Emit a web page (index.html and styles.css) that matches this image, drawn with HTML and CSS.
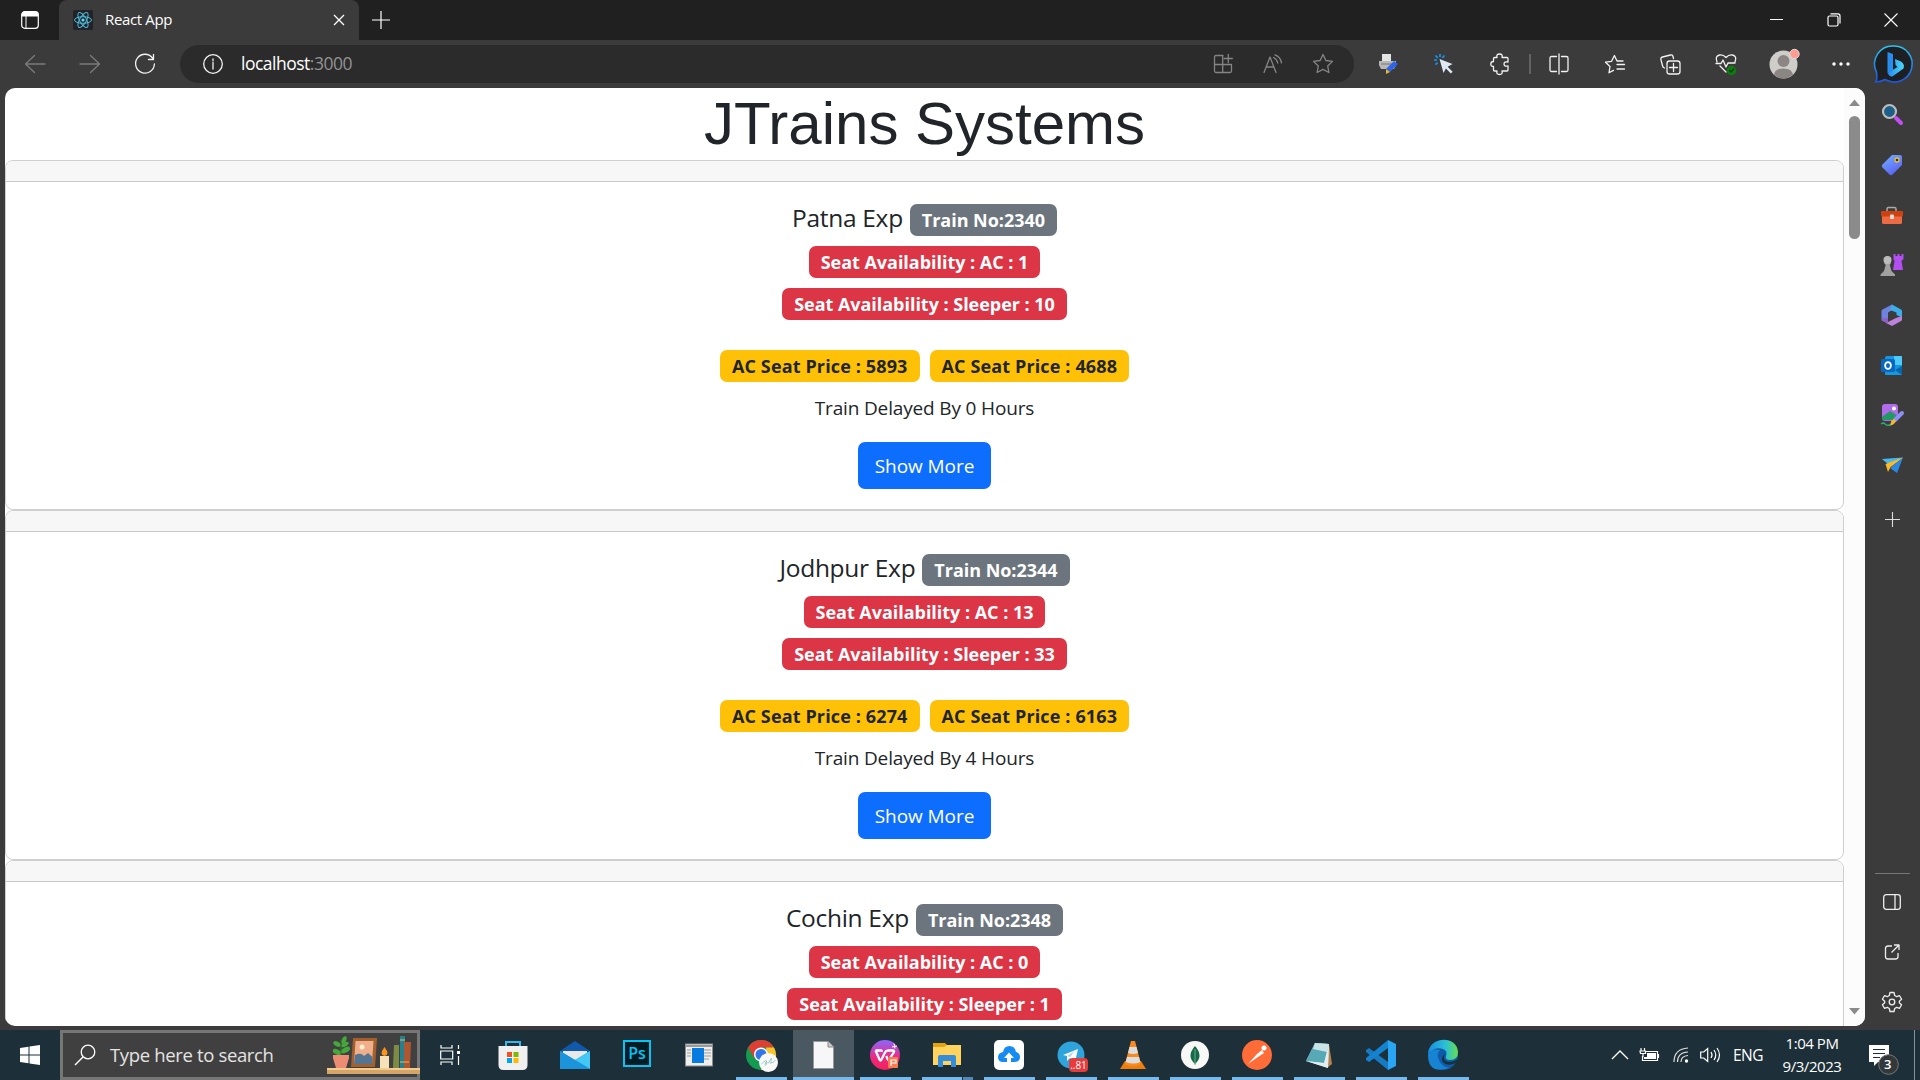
FILE: index.html
```html
<!DOCTYPE html>
<html lang="en">
<head>
<meta charset="utf-8">
<title>React App</title>
<link rel="stylesheet" href="styles.css">
</head>
<body>
<header class="titlebar">
  <div class="tab-actions"><svg width="18" height="18" viewBox="0 0 18 18"><rect x=".7" y=".7" width="16.6" height="16.6" rx="3" fill="none" stroke="#fff" stroke-width="1.2"/><path d="M1 5V3.500Q1 1 3.500 1h11Q17 1 17 3.500V5z" fill="#fff" stroke="#fff"/><path d="M5 5v12" stroke="#fff"/></svg></div>
  <div class="tab">
    <svg class="favicon" width="20" height="20" viewBox="0 0 20 20"><rect width="20" height="20" rx="1.500" fill="#20232a"/><g fill="none" stroke="#52bcd8" stroke-width="1"><ellipse cx="10" cy="10" rx="8.500" ry="3.300"/><ellipse cx="10" cy="10" rx="8.500" ry="3.300" transform="rotate(60 10 10)"/><ellipse cx="10" cy="10" rx="8.500" ry="3.300" transform="rotate(120 10 10)"/></g><circle cx="10" cy="10" r="1.600" fill="#61dafb"/></svg>
    <span class="tab-title">React App</span>
    <svg class="tab-close" width="12" height="12" viewBox="0 0 12 12"><path d="M1 1l10 10M11 1L1 11" stroke="#fff" stroke-width="1.300"/></svg>
  </div>
  <svg class="new-tab" width="18" height="18" viewBox="0 0 18 18"><path d="M9 0v18M0 9h18" stroke="#fff" stroke-width="1.200"/></svg>
  <div class="window-controls">
    <span><svg width="13" height="13" viewBox="0 0 13 13"><path d="M0 6.500h13" stroke="#fff"/></svg></span>
    <span><svg width="14" height="14" viewBox="0 0 14 14"><rect x="1" y="3" width="10" height="10" rx="1.500" fill="none" stroke="#fff" stroke-width="1.200"/><path d="M3.500.800H11Q13 .800 13 3v7.500" fill="none" stroke="#fff" stroke-width="1.200"/></svg></span>
    <span><svg width="14" height="14" viewBox="0 0 14 14"><path d="M.500.500l13 13M13.500.500l-13 13" stroke="#fff" stroke-width="1.100"/></svg></span>
  </div>
</header>

<nav class="toolbar">
  <div class="nav-buttons">
    <span class="dim"><svg width="22" height="20" viewBox="0 0 22 20"><path d="M21 10H1.500M10.500 1.500L1.500 10l9 8.500"/></svg></span>
    <span class="dim"><svg width="22" height="20" viewBox="0 0 22 20"><path d="M1 10h19.500M11.500 1.500l9 8.500-9 8.500"/></svg></span>
    <span><svg width="22" height="22" viewBox="0 0 22 22"><path d="M18.500 5A9.400 9.400 0 1 0 20.400 11M19.500 1.500v5h-5"/></svg></span>
  </div>
  <div class="address">
    <svg class="info" width="22" height="22" viewBox="0 0 22 22"><circle cx="11" cy="11" r="9.300"/><path d="M11 9.500v6.500M11 6v1.800"/></svg>
    <span class="url">localhost<span class="port">:3000</span></span>
    <span class="address-icon"><svg width="20" height="20" viewBox="0 0 20 20"><path d="M10 1.500H3Q1.500 1.500 1.500 3v14Q1.500 18.500 3 18.500h14q1.500 0 1.500-1.500v-6.500h-17M9.700 1.500v17M15.300.500v8M11.300 4.500h8"/></svg></span>
    <span class="address-icon"><svg width="20" height="20" viewBox="0 0 20 20"><path d="M1 18.500L7 3l6 15.500M3.300 13h7.500M10.500 3.500q3.500 1.500 4.200 5.500M12 .800q5.500 2 6.500 8"/></svg></span>
    <span class="address-icon"><svg width="22" height="22" viewBox="0 0 22 22"><path d="M11 1.500l2.900 6 6.600.9-4.800 4.600 1.200 6.500-5.900-3.100-5.900 3.100 1.200-6.500L1.500 8.400l6.600-.9z"/></svg></span>
  </div>
  <div class="tools">
    <i></i>
    <span><svg class="solid" width="20" height="20" viewBox="0 0 20 20"><path d="M4 0h9v7H4z" fill="#e4e4e4"/><path d="M1 7h17v4l-2 4H3l-2-4z" fill="#b9b9b9"/><path d="M3 10h12" stroke="#777"/><path d="M16 7l4 3-8 8-4-3z" fill="#2f63ea"/><path d="M8 15l4 3-4 2z" fill="#e7bc25"/></svg></span>
    <span><svg class="solid" width="20" height="20" viewBox="0 0 20 20"><path d="M5.500 5l4 14 2.400-4.400 5 4.900 1.700-1.700-5-5L18.500 10z" fill="#dfe8f5"/><path d="M6 0v3M1.500 1.500l2.300 2.300M0 6h3M1.500 10.700l2-2M10.500 1.500L8.300 3.800" stroke="#1494f2" stroke-width="1.700"/></svg></span>
    <span><svg width="20" height="22" viewBox="0 0 20 22"><path d="M4.500 4.500H7Q6 1 9.500 1T12 4.500h5Q18 4.500 18 5.500V9q-4-.8-4 2t4 2v4Q18 18 17 18h-5q1 3.500-2.500 3.500T7 18H4.500q-1 0-1-1v-3.500Q.800 13.500.800 11t2.700-2.500v-3q0-1 1-1z"/></svg></span>
    <b></b>
    <span><svg width="20" height="20" viewBox="0 0 20 20"><path d="M7.500 2.500h-5Q1 2.500 1 4v12q0 1.500 1.500 1.500h5M12.500 2.500h5Q19 2.500 19 4v12q0 1.500-1.500 1.500h-5M10 0v20"/></svg></span>
    <span><svg width="21" height="21" viewBox="0 0 21 21"><path d="M19 7h-6l-2.600-5.500-2.800 5.800-6.100.9L6 12.500l-1 6.300 4.500-2.400M13 10.500h7.500M13 15h7.500"/></svg></span>
    <span><svg width="21" height="21" viewBox="0 0 21 21"><rect x="7" y="7" width="13" height="13" rx="2.500"/><path d="M13.500 9.500v8M9.500 13.500h8M4.500 14Q3 13.500 2.600 12L.900 5.500Q.500 3.500 2.500 3l8-2q2-.5 2.500 1.500l.5 2"/></svg></span>
    <span><svg width="22" height="22" viewBox="0 0 22 22"><path d="M2 9Q-.3 3 4.500 2 8 1.300 11 4.500q3-3.200 6.500-2.500Q22.300 3 20 9M1 10.500h5l2-3.500 3 7 2-4h7M5 13l6 6"/><circle class="heart-ok" cx="16.500" cy="17.500" r="4"/><path class="heart-tick" d="M14.500 17.500l1.500 1.500 2.800-3"/></svg></span>
    <span><svg class="solid" width="30" height="30" viewBox="0 0 30 30"><circle cx="14.500" cy="15.500" r="14" fill="#cfcdca"/><circle cx="14.500" cy="12" r="6" fill="#8b8683"/><path d="M5 25.500q1-6 9.500-6t9.500 6q-4 4-9.500 4T5 25.500z" fill="#8b8683"/><circle cx="25.500" cy="5" r="4.700" fill="#ff9c92" stroke="#ddd"/></svg></span>
    <span><svg class="solid" width="18" height="4" viewBox="0 0 18 4"><g fill="#fff"><circle cx="2" cy="2" r="1.700"/><circle cx="9" cy="2" r="1.700"/><circle cx="16" cy="2" r="1.700"/></g></svg></span>
    <span><svg class="solid" width="38" height="38" viewBox="0 0 38 38"><defs><linearGradient id="ring" x1="0" y1="0" x2="0" y2="1"><stop stop-color="#2bc4ee"/><stop offset="1" stop-color="#1e55dc"/></linearGradient><linearGradient id="bee" x1="0" y1="0" x2="1" y2="0"><stop stop-color="#2588ef"/><stop offset="1" stop-color="#4ad9f6"/></linearGradient></defs><path d="M19 1a18 18 0 1 1-9 33.500Q5 37 .800 37 2.500 34 1.500 27A18 18 0 0 1 19 1z" fill="#1d1f22" stroke="url(#ring)" stroke-width="1.600"/><path d="M12.500 7l5.500 2v16l-5.500 3z" fill="#278df0"/><path d="M20 14l6 2.500q4 2.500 2.500 7L18 31q-3 2-5.500-3l10-6-2-2z" fill="url(#bee)"/></svg></span>
  </div>
</nav>

<div class="workspace">
  <div class="viewport">
    <main class="page">
      <h1>JTrains Systems</h1>
      <section class="card">
        <div class="card-header"></div>
        <div class="card-body">
          <h5><span class="name">Patna Exp</span> <span class="badge gray">Train No:2340</span></h5>
          <span class="badge red">Seat Availability : AC : 1</span>
          <span class="badge red">Seat Availability : Sleeper : 10</span>
          <div class="prices"><span class="badge yellow">AC Seat Price : 5893</span><span class="badge yellow">AC Seat Price : 4688</span></div>
          <p>Train Delayed By 0 Hours</p>
          <button class="more">Show More</button>
        </div>
      </section>
      <section class="card">
        <div class="card-header"></div>
        <div class="card-body">
          <h5><span class="name">Jodhpur Exp</span> <span class="badge gray">Train No:2344</span></h5>
          <span class="badge red">Seat Availability : AC : 13</span>
          <span class="badge red">Seat Availability : Sleeper : 33</span>
          <div class="prices"><span class="badge yellow">AC Seat Price : 6274</span><span class="badge yellow">AC Seat Price : 6163</span></div>
          <p>Train Delayed By 4 Hours</p>
          <button class="more">Show More</button>
        </div>
      </section>
      <section class="card">
        <div class="card-header"></div>
        <div class="card-body">
          <h5><span class="name">Cochin Exp</span> <span class="badge gray">Train No:2348</span></h5>
          <span class="badge red">Seat Availability : AC : 0</span>
          <span class="badge red">Seat Availability : Sleeper : 1</span>
        </div>
      </section>
    </main>
    <div class="scrollbar">
      <svg width="11" height="7" viewBox="0 0 11 7"><path d="M0 7L5.500.500 11 7z" fill="#8b8b8b"/></svg>
      <div class="thumb"></div>
      <svg class="down" width="11" height="7" viewBox="0 0 11 7"><path d="M0 0l5.500 6.500L11 0z" fill="#8b8b8b"/></svg>
    </div>
  </div>
  <aside class="sidebar">
    <span><svg width="22" height="22" viewBox="0 0 22 22"><path d="M15 15l5 5" stroke="#c44df5" stroke-width="4" stroke-linecap="round"/><circle cx="8.500" cy="8.500" r="6.500" fill="#1d5f88" stroke="#bcbcbc" stroke-width="2.200"/></svg></span>
    <span><svg width="22" height="22" viewBox="0 -1 22 22"><defs><linearGradient id="tag" x1="0" y1="0" x2=".6" y2="1"><stop stop-color="#72b2ff"/><stop offset="1" stop-color="#5c62f5"/></linearGradient></defs><path d="M11 1h8q2 0 2 2v8L11.500 20.500q-1.500 1.500-3 0l-7-7q-1.500-1.500 0-3z" fill="url(#tag)"/><circle cx="16" cy="6" r="2" fill="#263052" stroke="#f2c11c" stroke-width="1.300"/></svg></span>
    <span><svg width="24" height="20" viewBox="0 -1.500 24 20"><path d="M7 6V3.500Q7 2 8.500 2h6Q16 2 16 3.500V6" fill="none" stroke="#aaa" stroke-width="1.500"/><path d="M2 9h20v8q0 1.500-1.500 1.500h-17Q2 18.500 2 17z" fill="#ed6a43"/><rect x="1" y="5.500" width="22" height="5.500" rx="1" fill="#cf410f"/><rect x="10" y="9" width="4" height="4.500" rx="1" fill="#ddd"/></svg></span>
    <span><svg width="24" height="24" viewBox="0 0 24 24"><path d="M13.500 1h2v2h2V1h2v2h2V1h2v5l-2 2 1.500 9h-10l1.500-9-1-2z" fill="#b14ff0"/><path d="M4 10h7l-1.200 2 1.700 6 3.500 3.500V23H.500v-1.500L4 18l1.700-6z" fill="#a1a1a1"/><circle cx="7.500" cy="7" r="4" fill="#bcbcbc"/></svg></span>
    <span><svg width="22" height="22" viewBox="0 0 22 22"><path d="M11 .500L1.500 5.500Q.500 6 .500 7.500v8q0 1 1 1.500L7 19.500V8.500l6-3.500z" fill="#6d83df"/><path d="M11 .500l9 5q1 .5 1 1.500v6.500L15.500 11V8.500L9 6z" fill="#3caee9"/><path d="M21 12v3.500q0 1-1 1.500l-8 4.500q-1 .5-2 0l-5-2.500 10-5z" fill="#bd83dc"/><path d="M7 14v5.500l-5.500-3-1-2z" fill="#905fc4"/></svg></span>
    <span><svg width="22" height="22" viewBox="0 -1 22 22"><path d="M6 1h14q1 0 1 1v18H5q-1 0-1-1V3q0-2 2-2z" fill="#1499e0"/><path d="M13 1h7q1 0 1 1v8h-8z" fill="#4ccaf9"/><path d="M14 15l7-4v9z" fill="#0864ad"/><rect y="4" width="14" height="13" rx="1.500" fill="#0868c0"/><ellipse cx="7" cy="10.500" rx="2.900" ry="3.400" fill="none" stroke="#fff" stroke-width="1.800"/></svg></span>
    <span><svg width="24" height="24" viewBox="0 0 24 24"><rect x="2" y="1" width="16" height="17" rx="3" fill="#b26beb"/><path d="M2 14l8-6 8 5v4H2z" fill="#209964"/><circle cx="14" cy="5.500" r="2" fill="#fff"/><path d="M15 17l7-7" stroke="#8a90f5" stroke-width="4" stroke-linecap="round"/><path d="M16 18q-2 5-7 4 2-1 2-3t3-3z" fill="#f5b62b"/><path d="M1 21q3-2 4 0t6 1" fill="none" stroke="#27b36e" stroke-width="1.500"/></svg></span>
    <span><svg width="23" height="18" viewBox="0 0 23 18"><path d="M1 3l21-1.500-12 9z" fill="#47b9f2"/><path d="M22 1.500L16 17l-7-5z" fill="#2989e4"/><path d="M4.500 8L22 1.500 9.500 11 7 16z" fill="#ffb922"/></svg></span>
    <span class="add"><svg width="15" height="15" viewBox="0 0 15 15"><path d="M7.500 0v15M0 7.500h15" stroke="#ddd" stroke-width="1.100"/></svg></span>
    <hr>
    <span class="line"><svg width="18" height="16" viewBox="0 0 18 16"><rect x=".7" y=".7" width="16.600" height="14.600" rx="2.500"/><path d="M12 1v14"/></svg></span>
    <span class="line"><svg width="16" height="16" viewBox="0 0 16 16"><path d="M8 2H4Q1.500 2 1.500 4.500v8Q1.500 15 4 15h7.500Q14 15 14 12.500V9M10 1h5v5M15 1L7.500 8.500"/></svg></span>
    <span class="line"><svg width="22" height="22" viewBox="0 0 22 22"><circle cx="11" cy="11" r="2.800"/><path d="M9 1.500h4l.7 3 2 1.200 2.900-1 2 3.500-2.300 2v1.600l2.300 2-2 3.500-2.900-1-2 1.200-.7 3H9l-.7-3-2-1.200-2.900 1-2-3.500 2.300-2v-1.600l-2.300-2 2-3.500 2.900 1 2-1.200z"/></svg></span>
  </aside>
</div>

<footer class="taskbar">
  <div class="start"><svg width="20" height="20" viewBox="0 0 20 20"><path d="M0 3l8.500-1.200v7.700H0zM9.500 1.600L20 0v9.500H9.500zM0 10.500h8.500v7.700L0 17zM9.500 10.500H20V20L9.500 18.400z" fill="#fff"/></svg></div>
  <div class="search">
    <svg width="22" height="22" viewBox="0 0 22 22"><circle cx="14" cy="8" r="6.800" fill="none" stroke="#fff" stroke-width="1.300"/><path d="M9 13l-8 8" stroke="#fff" stroke-width="1.400"/></svg>
    <span>Type here to search</span>
    <svg class="shelf" width="93" height="40" viewBox="0 0 93 40"><path d="M0 33h93v6H0z" fill="#d4a567"/><path d="M0 33h93v2H0z" fill="#f1cc92"/><g fill="#46a83c"><ellipse cx="10" cy="17" rx="4.500" ry="2.500" transform="rotate(25 10 17)"/><ellipse cx="18.500" cy="15" rx="5" ry="2.500" transform="rotate(-28 18.500 15)"/><ellipse cx="10" cy="9" rx="4" ry="2.200" transform="rotate(30 10 9)"/><ellipse cx="17" cy="5" rx="4" ry="2.200" transform="rotate(-65 17 5)"/><ellipse cx="18" cy="9.500" rx="4" ry="2" transform="rotate(-28 18 9.500)"/></g><path d="M14 5v15" stroke="#307c30"/><path d="M6 20h16v3l-3 10H9L6 23z" fill="#eb8c73"/><path d="M26 3h24l-2 29H24z" fill="#a35f2c"/><path d="M28.500 6h18L45 29H27z" fill="#f0af8c"/><circle cx="35" cy="12" r="2.500" fill="#fff0cb"/><path d="M28 20q6-3 9 1l4-3 4.500 4-.5 7H27z" fill="#547591"/><path d="M53 21h9v12h-9z" fill="#f6e1b8"/><path d="M57.500 12q6 8 0 9-6-1 0-9z" fill="#ff9419"/><path d="M67 10h5v23h-6z" fill="#7e8b43"/><path d="M73 1h5v32h-5z" fill="#258191"/><path d="M77 7h7l-1 26h-6z" fill="#ac572f"/><path d="M73 5h5M73 27h9" stroke="#e9b954"/></svg>
  </div>
  <div class="task-view"><svg width="20" height="20" viewBox="0 0 20 20"><path d="M1 0v3h11V0M1 20v-3h11v3M.700 6h12v8H.700zM18.500 0v4M18.500 11v9" fill="none" stroke="#fff" stroke-width="1.200"/><path d="M17 6h3v3h-3z" fill="#fff"/></svg></div>
  <div class="app"><svg width="30" height="30" viewBox="0 0 30 30"><path d="M8 7V2h14v5" fill="none" stroke="#35b7eb" stroke-width="2"/><path d="M.500 6h29v19q0 5-5 5h-19q-5 0-5-5z" fill="#f0f0f0"/><path d="M9 12h5v5H9z" fill="#f25022"/><path d="M15.500 12h5v5h-5z" fill="#7fba00"/><path d="M9 18h5v5H9z" fill="#00a4ef"/><path d="M15.500 18h5v5h-5z" fill="#ffb900"/></svg></div>
  <div class="app"><svg width="30" height="30" viewBox="0 0 30 30"><path d="M0 11L15 1l15 10v8H0z" fill="#1059ad"/><path d="M3 11h24v8l-12 6-12-6z" fill="#e9e9e9"/><path d="M0 11l15 9L30 11v18H0z" fill="#23a4e5"/><path d="M15 20l15-9v18z" fill="#43c7f5"/><path d="M15 20l15 9H0V11z" fill="#1b94dc"/></svg></div>
  <div class="app"><div class="photoshop">Ps</div></div>
  <div class="app"><svg width="28" height="24" viewBox="0 0 28 24"><rect x=".5" y="1" width="27" height="22" fill="#eee" stroke="#8c8c8c"/><path d="M1 2h26v2H1z" fill="#999"/><path d="M2 7h4M2 10h4M2 13h4M19 7h7M19 10h7M19 13h7M19 16h5" stroke="#999"/><path d="M7 5h12v15H7z" fill="#087be0"/></svg></div>
  <div class="app running"><svg width="30" height="30" viewBox="0 0 30 30"><circle cx="15" cy="15" r="15" fill="#149b50"/><path d="M2 7.500A15 15 0 0 1 28 7.500H15l-6.500 11z" fill="#df3f32"/><path d="M28 7.500A15 15 0 0 1 15 30l6.500-11.500L20 7.500z" fill="#fbc42b"/><circle cx="15" cy="14.500" r="7" fill="#fff"/><circle cx="15" cy="14.500" r="5.500" fill="#3177e8"/><circle cx="22.500" cy="22.500" r="9.500" fill="#f9f9fa"/><path d="M15.500 24q5-5 5-3c0 5-2 6-1 2 1-3 2 1 3 0l3-5c-1 7-1 6 0 4l1 1 3-3" fill="none" stroke="#9acbc0"/></svg></div>
  <div class="app running active"><svg width="21" height="28" viewBox="0 0 21 28"><path d="M.500.500H15L20.500 6v21.500H.500z" fill="#f7f7f7" stroke="#999"/><path d="M15 .500V6h5.500" fill="#ccc" stroke="#888"/></svg></div>
  <div class="app running"><svg width="30" height="30" viewBox="0 0 30 30"><defs><linearGradient id="wps" x1="0" y1="0" x2="0" y2="1"><stop stop-color="#8d66ff"/><stop offset=".6" stop-color="#ed287f"/><stop offset="1" stop-color="#f4215c"/></linearGradient></defs><circle cx="15" cy="15" r="15" fill="url(#wps)"/><path d="M5.500 10.500H11q1 0 .5 1.200M5.500 10.500l4 9q1 2 2 0l3.500-7q1-2 3-2h5q1.500 0 1 1.500L19.500 19q-1 2-2 0l-1.200-3" fill="none" stroke="#fff" stroke-width="2.300"/><path d="M22 7l5-1M24 3.500l1 5" stroke="#fff"/><rect x="18" y="17" width="10" height="11" rx="1" fill="#ff794e"/><path d="M21 26v-6h5v3h-5" fill="none" stroke="#fff" stroke-width="1.200"/></svg></div>
  <div class="app running grouped"><svg width="28" height="24" viewBox="0 0 28 24"><path d="M0 0h12l3 3v6H0z" fill="#e4a210"/><path d="M0 4h11l3-2h14v20H0z" fill="#ffd35d"/><path d="M5 24V14q0-2 2-2h14q2 0 2 2v10h-5v-6h-8v6z" fill="#348ddb"/></svg></div>
  <div class="app running"><svg width="30" height="30" viewBox="0 0 30 30"><rect width="30" height="30" rx="5" fill="#fff"/><path d="M9 22q-5 0-5-5 0-4 5-5 1-6 6.500-6T22 12q4 1 4 5 0 5-6 5z" fill="#168cf2"/><path d="M15 12.500L10 18h3v6h4v-6h3z" fill="#fff"/></svg></div>
  <div class="app running telegram"><svg width="28" height="28" viewBox="0 0 28 28"><circle cx="14" cy="14" r="13.500" fill="#2fa3dc"/><path d="M6 14l15-6-3 13-5-4-3 3v-5z" fill="#fff"/><path d="M10 15l8-5-5 6" fill="#add3ea"/></svg><b>..81</b></div>
  <div class="app running"><svg width="26" height="30" viewBox="0 0 26 30"><path d="M5 21h16l5 8H0z" fill="#ee7e0b"/><path d="M11 1h4l6 23q-8 5-16 0z" fill="#fa8a1f"/><path d="M9.500 7h7l1.500 6q-5 2-10 0zM7 17h12l1.300 5q-7 3-14.600 0z" fill="#ddd"/></svg></div>
  <div class="app running"><svg width="28" height="28" viewBox="0 0 28 28"><circle cx="14" cy="14" r="14" fill="#f8f8f6"/><path d="M14 5q9 10 0 18-9-8 0-18z" fill="#136b4a"/><path d="M14 8v16" stroke="#76a68a"/></svg></div>
  <div class="app running"><svg width="30" height="30" viewBox="0 0 30 30"><circle cx="15" cy="15" r="15" fill="#ff6c37"/><path d="M6 24l9-10 5-4 2 3-6 4z" fill="#fff"/><circle cx="22" cy="8" r="2.500" fill="#fff"/></svg></div>
  <div class="app running"><svg width="28" height="28" viewBox="0 0 28 28"><path d="M24 3l3 20-5 4z" fill="#b5824c"/><path d="M10 2l14 1-1 24L1 20z" fill="#a7d3d8"/><path d="M10 2l14 1-5 19L1 20z" fill="#57a9b6"/><path d="M10 2l14 1-2 8L8 8z" fill="#c9e4e6"/><path d="M19 22l5-19-1 24-22-7z" fill="#e5eeee"/></svg></div>
  <div class="app running"><svg width="30" height="30" viewBox="0 0 30 30"><path d="M0 10l3-2L22 22v8L0 12z" fill="#177bc3"/><path d="M0 20l3 2L22 8V0L0 18z" fill="#1382d1"/><path d="M22 0l8 4v22l-8 4z" fill="#29a5f4"/></svg></div>
  <div class="app running"><svg width="30" height="30" viewBox="0 0 30 30"><defs><linearGradient id="wave"><stop stop-color="#168ce0"/><stop offset=".6" stop-color="#2cc1d3"/><stop offset="1" stop-color="#66df4c"/></linearGradient></defs><circle cx="15" cy="15" r="15" fill="#0d5ba9"/><path d="M0 14C1-4 29-5 30 12q0 8-8 8-5 0-4-4 2-5-3-7-8-3-15 5z" fill="url(#wave)"/><path d="M0 15Q3 8 12 10q-4 4-1 10 3 7 11 8-22 7-22-13z" fill="#1684d3"/><path d="M17 14q-4 7 5 8 4 0 8-3v3l-2 1q-9 4-13-1-3-4 2-8z" fill="#1d2f38"/></svg></div>
  <div class="tray">
    <span><svg width="18" height="10" viewBox="0 0 18 10"><path d="M1 9l8-8 8 8" fill="none" stroke="#fff" stroke-width="1.300"/></svg></span>
    <span><svg width="20" height="14" viewBox="0 0 20 14"><path d="M5 3.500h12.500v9H2.500V8M18.500 6v4M1 0v3M4.500 0v3M0 3h5.500v2.500h-5zM3 6v3" fill="none" stroke="#fff" stroke-width="1.200"/><path d="M7 5h9v6H4V9h3z" fill="#fff"/></svg></span>
    <span><svg width="16" height="16" viewBox="0 0 16 16"><g fill="none" stroke="#ddd" stroke-width="1.200"><path d="M1 15Q1 2 15 1M4.500 15q0-9.500 10.500-10M8 15q0-6 7-6.500"/></g><circle cx="13.500" cy="14" r="1.700" fill="#fff"/></svg></span>
    <span><svg width="21" height="16" viewBox="0 0 21 16"><path d="M.700 5h3l4-3.500v13l-4-3.500h-3zM11 5q2 3 0 6M14 3q3.500 5 0 10M17 1q5 7 0 14" fill="none" stroke="#fff" stroke-width="1.200"/></svg></span>
    <span class="lang">ENG</span>
    <span class="clock"><em>1:04 PM</em><em>9/3/2023</em></span>
    <span class="notify"><svg width="30" height="30" viewBox="0 0 30 30"><path d="M0 0h20v17H9l-4 4v-4H0z" fill="#fff"/><path d="M4 4.500h12M4 8.500h12M4 12.500h7" stroke="#1e2f38"/><circle cx="19.500" cy="19.500" r="9.800" fill="#33383b" stroke="#777"/></svg><b>3</b></span>
    <i></i>
  </div>
</footer>
</body>
</html>
```

FILE: styles.css
```css
* { box-sizing: border-box; }
body {
  margin: 0;
  width: 1920px;
  height: 1080px;
  overflow: hidden;
  display: flex;
  flex-direction: column;
  background: #3b3b3b;
  font-family: "Open Sans", "Noto Sans", sans-serif;
}
svg { display: block; flex: none; overflow: visible; }

/* Tab strip */
.titlebar { height: 40px; flex: none; display: flex; align-items: center; background: #202020; }
.tab-actions { width: 59px; display: flex; justify-content: center; }
.tab { width: 300px; height: 40px; display: flex; align-items: center; padding: 0 14px; border-radius: 8px 8px 0 0; background: #3b3b3b; color: #fff; font-size: 15px; }
.tab-title { margin-left: 12px; padding-bottom: 2px; flex: 1; letter-spacing: -.35px; }
.new-tab { margin-left: 13px; }
.window-controls { margin-left: auto; display: flex; }
.window-controls span { width: 57.5px; display: flex; justify-content: center; }

/* Toolbar */
.toolbar { height: 48px; flex: none; display: flex; align-items: center; }
.toolbar svg:not(.solid) { fill: none; stroke: #f2f2f2; stroke-width: 1.3; stroke-linecap: round; stroke-linejoin: round; }
.toolbar .dim svg:not(.solid) { stroke: #7b7b7b; }
.toolbar .heart-ok { fill: #107c10; stroke: #107c10; }
.toolbar .heart-tick { stroke: #083f08; }
.nav-buttons { width: 180px; padding-left: 7.5px; display: flex; }
.nav-buttons span { width: 55px; display: flex; align-items: center; justify-content: center; }
.address { width: 1174px; height: 38px; padding: 0 6px 0 21.5px; border-radius: 19px; display: flex; align-items: center; background: #2b2b2b; }
.url { margin-left: 17.5px; padding-bottom: 2px; flex: 1; color: #fff; font-size: 17.5px; letter-spacing: -.5px; }
.port { color: #929292; }
.address-icon { width: 50px; display: flex; justify-content: center; }
.toolbar .address-icon svg:not(.solid) { stroke: #858585; }
.tools { display: grid; grid-template-columns: 6px 56px 56px 55px 4px 56px 55px 56px 55px 61px 54px 51px; align-items: center; }
.tools span { display: flex; justify-content: center; }
.tools b { width: 2px; height: 20px; margin-left: 2px; background: #626262; }

/* Browser content */
.workspace { height: 942px; flex: none; display: flex; padding-left: 5px; }
.viewport { width: 1860px; height: 938px; display: flex; overflow: hidden; border-radius: 10px; background: #fff; }
.page { width: 1839px; height: 938px; overflow: hidden; color: #212529; text-align: center; }
h1 { margin: 0; font: 500 60px/72px "Liberation Sans", Arial, sans-serif; }
.card { height: 350px; border: 1px solid #cfcfcf; border-radius: 8px; overflow: hidden; }
.card-header { height: 21px; background: #f7f7f7; border-bottom: 1px solid #c9c9c9; }
.card-body { display: flex; flex-direction: column; align-items: center; gap: 10px; padding-top: 22px; }
h5 { margin: 0; height: 32px; display: flex; align-items: center; gap: 7px; font-size: 24.5px; font-weight: 500; letter-spacing: -.3px; white-space: nowrap; }
.name { padding-bottom: 4px; line-height: 32px; }
.badge { height: 32px; padding: 0 12px; border-radius: 7px; font-size: 18px; line-height: 32px; font-weight: 700; letter-spacing: -.03px; color: #fff; white-space: nowrap; }
.gray { background: #6c757d; }
.red { background: #dc3545; }
.yellow { background: #ffc107; color: #212529; letter-spacing: .13px; }
.prices { display: flex; gap: 10px; margin-top: 20px; }
p { margin: 0; height: 30px; font-size: 19px; line-height: 32px; letter-spacing: -.15px; }
.more { width: 133px; height: 47px; margin-top: 10px; padding: 0; border: 0; border-radius: 7px; background: #0d6efd; color: #fff; font: 19px/48px "Open Sans", sans-serif; letter-spacing: -.05px; }
.scrollbar { width: 21px; display: flex; flex-direction: column; align-items: center; padding: 11px 0; background: #fcfcfc; }
.thumb { width: 11px; height: 123px; margin-top: 10px; border-radius: 6px; background: #8b8b8b; }
.down { margin-top: auto; }

/* Edge sidebar */
.sidebar { width: 55px; height: 942px; display: flex; flex-direction: column; padding: 1px 1px 3px 0; }
.sidebar span { height: 50.2px; flex: none; display: flex; align-items: center; justify-content: center; }
.sidebar .add { margin-top: 4px; }
.sidebar hr { width: 35px; height: 1px; margin: auto auto 2px; border: 0; background: #777; }
.line svg { fill: none; stroke: #eee; stroke-width: 1.3; stroke-linejoin: round; }

/* Taskbar */
.taskbar { height: 50px; flex: none; display: flex; align-items: center; background: #1d2f38; color: #fff; }
.start { width: 60px; display: flex; justify-content: center; }
.search { width: 360px; height: 50px; display: flex; align-items: center; padding-left: 11px; border: 3px solid #767676; background: #404040; }
.search span { margin-left: 14px; padding-bottom: 2px; flex: 1; color: #e4e4e4; font-size: 18.5px; letter-spacing: -.35px; white-space: nowrap; }
.shelf { margin-right: -3px; }
.task-view { width: 62px; padding-right: 2px; display: flex; justify-content: center; }
.app { width: 62px; height: 50px; flex: none; display: flex; align-items: center; justify-content: center; position: relative; }
.running::after { content: ""; position: absolute; left: 6px; bottom: 0; width: 51px; height: 3px; background: #76b9ed; }
.active { background: linear-gradient(#4a5961, #4a5961) 1px 0 / 61px 50px no-repeat; }
.active::after { left: 1px; width: 61px; }
.grouped::after { background: linear-gradient(90deg, #76b9ed 40px, #1d2f38 40px, #1d2f38 41px, #5688b5 41px); }
.photoshop { width: 28px; height: 27px; margin-bottom: 3px; border: 2px solid #08c4f4; background: #001d26; color: #08c4f4; font: 600 16px/23px "Open Sans", sans-serif; text-align: center; }
.telegram b { position: absolute; left: 29px; top: 28px; width: 19px; height: 14px; border-radius: 4px; background: #e83b3b; font: 10px/14px "Open Sans", sans-serif; text-align: center; }
.tray { margin-left: auto; height: 50px; display: grid; grid-template-columns: 30px 30px 31px 28px 48px 80px 62px 6px; align-items: center; }
.tray span { display: flex; justify-content: center; }
.tray i { width: 1px; height: 50px; background: #84919a; }
.lang { font-size: 15.5px; letter-spacing: -.5px; }
.tray .clock { flex-direction: column; align-items: center; font-size: 15px; line-height: 23px; letter-spacing: -.45px; }
.clock em { font-style: normal; }
.tray .notify { position: relative; justify-content: flex-start; padding: 10px 0 0 17px; }
.notify b { position: absolute; left: 32px; top: 19px; font: 600 13px/20px "Open Sans", sans-serif; }
```
